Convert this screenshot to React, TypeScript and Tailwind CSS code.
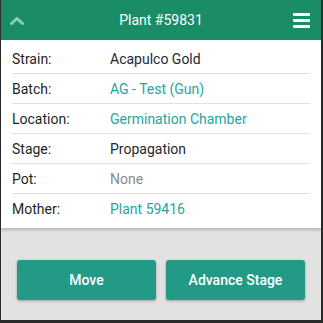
import React from "react";

const rows: { label: string; value: string; color: string }[] = [
  { label: "Strain:", value: "Acapulco Gold", color: "text-[#222831]" },
  { label: "Batch:", value: "AG - Test (Gun)", color: "text-[#26a69a]" },
  { label: "Location:", value: "Germination Chamber", color: "text-[#26a69a]" },
  { label: "Stage:", value: "Propagation", color: "text-[#222831]" },
  { label: "Pot:", value: "None", color: "text-[#8a8a8a]" },
  { label: "Mother:", value: "Plant 59416", color: "text-[#26a69a]" },
];

export default function App() {
  return (
    <div
      className="w-[323px] h-[323px] bg-[#2b2b2b] pl-px pr-[2px] pb-[3px] overflow-hidden"
      style={{ fontFamily: "Roboto, 'Liberation Sans', sans-serif" }}
    >
      <div className="h-full bg-[#e2e2e2] flex flex-col">
        <div className="h-[40px] bg-[#1a8c66] flex items-center justify-between pl-[9px] pr-[11px] relative">
          <svg width="14" height="9" viewBox="0 0 14 9" className="mt-[1px]">
            <path d="M1.5 7.5 L7 2.5 L12.5 7.5" fill="none" stroke="#86cfb2" strokeWidth="3" strokeLinecap="square" />
          </svg>
          <div className="absolute left-0 right-0 top-0 h-[40px] flex items-center justify-center text-white text-[14px] pointer-events-none">
            Plant #59831
          </div>
          <div className="flex flex-col gap-[3px] w-[17px] mt-[1px]">
            <div className="h-[3px] bg-white rounded-[1px]" />
            <div className="h-[3px] bg-white rounded-[1px]" />
            <div className="h-[3px] bg-white rounded-[1px]" />
          </div>
        </div>
        <div className="bg-white px-[11px] pt-[4px] pb-[4px] shadow-[0_2px_3px_rgba(0,0,0,0.2)] relative">
          {rows.map((r, i) => (
            <div
              key={r.label}
              className={`h-[30px] pt-px flex items-center text-[14px] ${i < rows.length - 1 ? "border-b border-[#e0e0e0]" : ""}`}
            >
              <div className="w-[98px] text-[#1f1f1f]">{r.label}</div>
              <div className={r.color}>{r.value}</div>
            </div>
          ))}
        </div>
        <div className="flex-1 flex items-end gap-[10px] px-[16px] pb-[20px]">
          <button className="w-[140px] h-[40px] rounded-[3px] bg-[#229a86] text-white text-[14px] font-medium shadow-[0_1px_3px_rgba(0,0,0,0.3)]">
            Move
          </button>
          <button className="w-[140px] h-[40px] rounded-[3px] bg-[#229a86] text-white text-[14px] font-medium shadow-[0_1px_3px_rgba(0,0,0,0.3)]">
            Advance Stage
          </button>
        </div>
      </div>
    </div>
  );
}
